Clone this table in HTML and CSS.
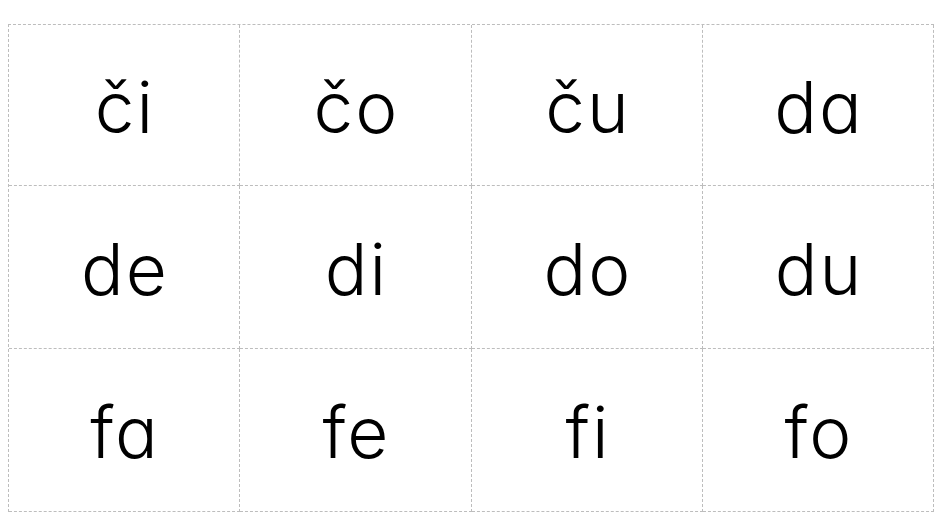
FILE: index.html
```html
<!DOCTYPE html>
<html lang="sk">
<head>
<meta charset="utf-8">
<title>Slabiky</title>
<link rel="stylesheet" href="styles.css">
</head>
<body>
<div class="sheet">
  <div class="cell">či</div>
  <div class="cell">čo</div>
  <div class="cell">ču</div>
  <div class="cell">da</div>
  <div class="cell">de</div>
  <div class="cell">di</div>
  <div class="cell">do</div>
  <div class="cell">du</div>
  <div class="cell">fa</div>
  <div class="cell">fe</div>
  <div class="cell">fi</div>
  <div class="cell">fo</div>
</div>
</body>
</html>
```
FILE: styles.css
```css
html, body {
  margin: 0;
  background: #ffffff;
}
body {
  padding: 24px 0 0 8px;
}
.sheet {
  display: grid;
  grid-template-columns: 231px 232px 231px 231px;
  grid-template-rows: 161px 163px 163px;
  width: max-content;
  border-top: 1px dashed #bdbdbd;
  border-left: 1px dashed #bdbdbd;
}
.cell {
  display: flex;
  align-items: center;
  justify-content: center;
  padding: 4px 0 0 2px;
  border-right: 1px dashed #bdbdbd;
  border-bottom: 1px dashed #bdbdbd;
  font-family: Inter, "Noto Sans", sans-serif;
  font-feature-settings: "cv11" 1;
  font-weight: 300;
  font-size: 71px;
  letter-spacing: 2px;
  color: #000000;
  line-height: 1;
}
```
